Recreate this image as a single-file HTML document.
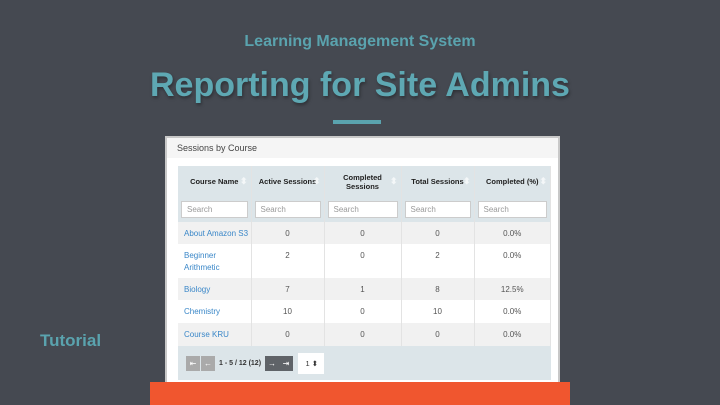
<!DOCTYPE html>
<html><head><meta charset="utf-8"><style>
*{margin:0;padding:0;box-sizing:border-box}
body{width:720px;height:405px;overflow:hidden;background:#454951;font-family:"Liberation Sans",sans-serif;position:relative}
.sub{position:absolute;top:33px;left:0;width:720px;text-align:center;color:#5aa3ae;font-weight:bold;font-size:16px}
.title{position:absolute;top:66px;left:0;width:720px;text-align:center;color:#5ea8b3;font-weight:bold;font-size:34px;text-shadow:1px 2px 3px rgba(0,0,0,.35)}
.bar{position:absolute;left:333px;top:120px;width:48px;height:4px;background:#5aa3ae}
.tut{position:absolute;left:40px;top:331px;color:#5aa3ae;font-weight:bold;font-size:17px}
.panel{position:absolute;left:165px;top:136px;width:395px;height:260px;background:#fff;border:2px solid #c8c8c8}
.ph{height:20px;background:#f5f5f5;font-size:9px;color:#444;padding:5px 0 0 10px}
table{position:absolute;left:11px;top:28px;width:373px;border-collapse:collapse;font-size:8px;color:#555}
td,th{border-right:1px solid #e3e3e3;text-align:center}
th{background:#dce5e9;height:31px;font-size:7.5px;color:#222;position:relative;font-weight:bold}
th span{position:absolute;right:3px;top:10px;color:#f4f7f8;font-size:9px}
.sr td{background:#dce5e9;height:25px;padding:0 3px}
.sr div{background:#fff;height:17px;text-align:left;color:#999;font-size:8px;padding:3px 5px;border:1px solid #ccc}
.l{text-align:left;color:#3a87c8;padding-left:6px}
.g td{background:#f1f1f1}
.top td{vertical-align:top;padding-top:6px;line-height:12px}
.ft td{background:#dce5e9;height:34px;text-align:left;padding-left:8px;border:none}
.b{display:inline-block;width:14px;height:15px;color:#fff;font-size:8px;text-align:center;line-height:15px;vertical-align:middle}
.orange{position:absolute;left:150px;top:382px;width:420px;height:23px;background:#f0562f}
</style></head><body>
<div class="sub">Learning Management System</div>
<div class="title">Reporting for Site Admins</div>
<div class="bar"></div>
<div class="tut">Tutorial</div>
<div class="panel">
<div class="ph">Sessions by Course</div>
<table>
<tr><th style="width:73px">Course Name<span>⬍</span></th><th style="width:73px">Active Sessions<span>⬍</span></th><th style="width:77px">Completed<br>Sessions<span>⬍</span></th><th style="width:73px">Total Sessions<span>⬍</span></th><th>Completed (%)<span>⬍</span></th></tr>
<tr class="sr"><td><div>Search</div></td><td><div>Search</div></td><td><div>Search</div></td><td><div>Search</div></td><td><div>Search</div></td></tr>
<tr class="g" style="height:22px"><td class="l">About Amazon S3</td><td>0</td><td>0</td><td>0</td><td>0.0%</td></tr>
<tr class="top" style="height:34px"><td class="l">Beginner<br>Arithmetic</td><td>2</td><td>0</td><td>2</td><td>0.0%</td></tr>
<tr class="g" style="height:22px"><td class="l">Biology</td><td>7</td><td>1</td><td>8</td><td>12.5%</td></tr>
<tr style="height:23px"><td class="l">Chemistry</td><td>10</td><td>0</td><td>10</td><td>0.0%</td></tr>
<tr class="g" style="height:23px"><td class="l">Course KRU</td><td>0</td><td>0</td><td>0</td><td>0.0%</td></tr>
<tr class="ft"><td colspan="5"><span class="b" style="background:#aaa">⇤</span><span class="b" style="background:#aaa;margin-left:1px">←</span><span style="font-size:7px;font-weight:bold;color:#333;margin:0 4px;vertical-align:middle">1 - 5 / 12 (12)</span><span class="b" style="background:#5f6368">→</span><span class="b" style="background:#5f6368;margin-left:0">⇥</span><span style="display:inline-block;width:26px;height:21px;background:#fff;margin-left:5px;vertical-align:middle;font-size:7.5px;color:#333;text-align:right;padding:6px 6px 0 0">1 ⬍</span></td></tr>
</table>
</div>
<div class="orange"></div>
</body></html>
